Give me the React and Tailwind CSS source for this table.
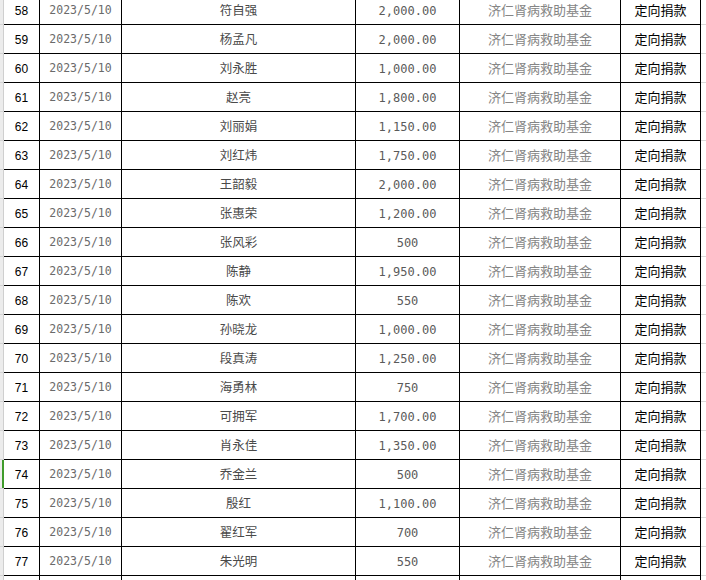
import React from 'react'

const rows = [
  [58, '符自强', '2,000.00'],
  [59, '杨孟凡', '2,000.00'],
  [60, '刘永胜', '1,000.00'],
  [61, '赵亮', '1,800.00'],
  [62, '刘丽娟', '1,150.00'],
  [63, '刘红炜', '1,750.00'],
  [64, '王韶毅', '2,000.00'],
  [65, '张惠荣', '1,200.00'],
  [66, '张风彩', '500'],
  [67, '陈静', '1,950.00'],
  [68, '陈欢', '550'],
  [69, '孙晓龙', '1,000.00'],
  [70, '段真涛', '1,250.00'],
  [71, '海勇林', '750'],
  [72, '可拥军', '1,700.00'],
  [73, '肖永佳', '1,350.00'],
  [74, '乔金兰', '500'],
  [75, '殷红', '1,100.00'],
  [76, '翟红军', '700'],
  [77, '朱光明', '550'],
  [78, '', ''],
]

const cjk = "font-['Noto_Sans_CJK_SC',sans-serif]"
const mono = "font-['DejaVu_Sans_Mono',monospace]"

function Row({ no, name, amount }) {
  const selected = no === 74
  return (
    <div className="flex h-[29px]">
      {/* row header edge */}
      <div className="w-[4px] shrink-0 flex border-b border-[#d4d4d4]">
        <div className="w-[2px] bg-[#ececec]" />
        <div className={selected ? 'w-[1px] bg-[#3f9b2b]' : 'w-[1px] bg-[#ececec]'} />
        <div className={selected ? 'w-[1px] bg-[#3f9b2b]' : 'w-[1px] bg-[#cfcfcf]'} />
      </div>
      <div className="w-[36px] shrink-0 flex items-center justify-center pt-[1px] border-r border-b border-black text-[12px] text-black font-['Liberation_Sans',sans-serif]">
        {name ? no : ''}
      </div>
      <div className={`w-[82px] shrink-0 flex items-center justify-center pt-[1px] border-r border-b border-black text-[11.5px] text-[#6a6a6a] ${mono}`}>
        {name ? '2023/5/10' : ''}
      </div>
      <div className={`w-[234px] shrink-0 flex items-center justify-center border-r border-b border-black text-[12.5px] text-[#4a4a4a] ${cjk}`}>
        {name}
      </div>
      <div className={`w-[104px] shrink-0 flex items-center justify-center pt-[1px] border-r border-b border-black text-[12px] text-[#5a5a5a] ${mono}`}>
        {amount}
      </div>
      <div className={`w-[161px] shrink-0 flex items-center justify-center border-r border-b border-black text-[13px] text-[#858585] ${cjk}`}>
        {name ? '济仁肾病救助基金' : ''}
      </div>
      <div className={`w-[80px] shrink-0 flex items-center justify-center border-r border-b border-black text-[13px] text-black ${cjk}`}>
        {name ? '定向捐款' : ''}
      </div>
      <div className="flex-1 border-b border-[#dadada]" />
    </div>
  )
}

export default function App() {
  return (
    <div className="w-[706px] h-[580px] overflow-hidden bg-white">
      <div className="-mt-[4px]">
        {rows.map(([no, name, amount]) => (
          <Row key={no} no={no} name={name} amount={amount} />
        ))}
      </div>
    </div>
  )
}
